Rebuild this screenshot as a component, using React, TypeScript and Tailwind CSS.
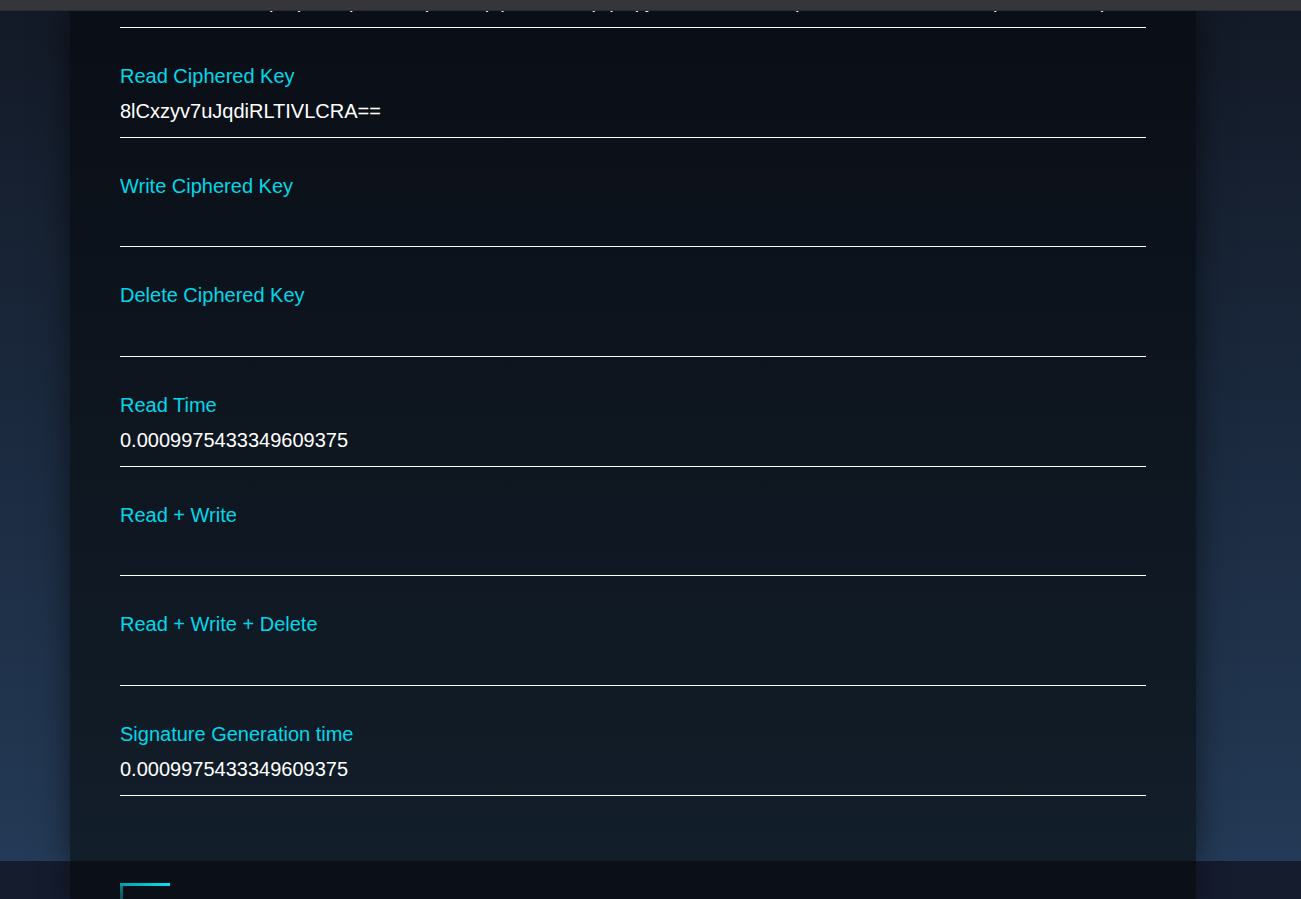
import React from "react";

type Row = { label: string; value: string };

const rows: Row[] = [
  {
    label: "Public Key",
    value:
      "8741095362817ipZip7H4lp50A9KipR3T6pipi8XU2N4prpitip" +
      "j3917402856130p4802716395028461lip58203914rp3D=",
  },
  { label: "Read Ciphered Key", value: "8lCxzyv7uJqdiRLTIVLCRA==" },
  { label: "Write Ciphered Key", value: "" },
  { label: "Delete Ciphered Key", value: "" },
  { label: "Read Time", value: "0.0009975433349609375" },
  { label: "Read + Write", value: "" },
  { label: "Read + Write + Delete", value: "" },
  { label: "Signature Generation time", value: "0.0009975433349609375" },
];

function Field({ label, value }: Row) {
  return (
    <div className="flex flex-col border-b border-white pt-[37px] pb-[13.67px]">
      <div className="text-[20px] leading-[23px] text-[#00d8ea] whitespace-nowrap">
        {label}
      </div>
      <div className="mt-[12px] min-h-[23px] text-[20px] leading-[23px] text-white whitespace-nowrap overflow-hidden">
        {value}
      </div>
    </div>
  );
}

export default function App() {
  return (
    <div
      className="flex h-[899px] w-full flex-col overflow-hidden"
      style={{ fontFamily: '"Liberation Sans", Arial, sans-serif' }}
    >
      <div className="h-[11px] shrink-0 border-b border-[#2a2b2e] bg-[#353639]" />
      <main className="flex-1 overflow-hidden bg-linear-to-b from-[#131a27] via-[#1b2a3f] to-[#243a56]">
        <div className="ml-[70px] flex h-full w-[1126px] flex-col bg-linear-to-b from-[#0a0e16] to-[#121e2a] px-[50px] shadow-[0_0_30px_rgba(0,0,0,0.55)]">
          <div className="-mt-[92.67px] flex flex-col">
            {rows.map((r) => (
              <Field key={r.label} {...r} />
            ))}
          </div>
        </div>
      </main>
      <footer className="h-[38px] shrink-0 overflow-hidden bg-[#151c2e]">
        <div className="ml-[70px] h-full w-[1126px] bg-[#0b0f18] pl-[50px] pt-[22px] shadow-[0_0_30px_rgba(0,0,0,0.55)]">
          <div className="flex w-[50px] flex-col">
            <div className="h-[3px] bg-linear-to-r from-[#0a9cab] to-[#05e4f1]" />
            <div className="h-[20px] w-[3px] bg-linear-to-b from-[#0c7b86] to-[#0a3a42]" />
          </div>
        </div>
      </footer>
    </div>
  );
}
